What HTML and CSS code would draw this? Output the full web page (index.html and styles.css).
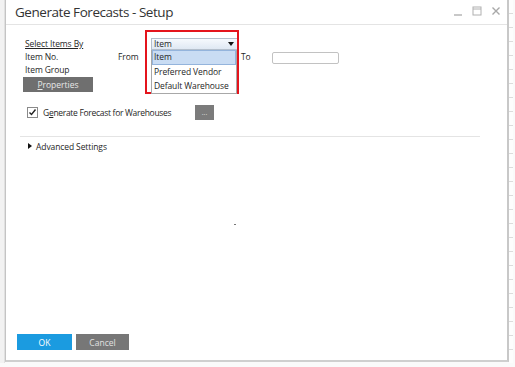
FILE: index.html
```html
<!DOCTYPE html>
<html lang="en">
<head>
    <meta charset="UTF-8">
    <meta name="viewport" content="width=device-width, initial-scale=1.0">
    <title>Generate Forecasts - Setup</title>
    <link rel="stylesheet" href="styles.css">
</head>
<body>
    <div class="backdrop-left"></div>

    <div class="window">
        <div class="titlebar">
            <span class="title">Generate Forecasts - Setup</span>
            <div class="controls">
                <svg width="10" height="10" viewBox="0 0 10 10"><path d="M1 9h8" stroke="#b0b0b0" stroke-width="1.4"/></svg>
                <svg width="10" height="10" viewBox="0 0 10 10"><rect x="1" y="1" width="8" height="8" fill="none" stroke="#b0b0b0"/><path d="M1 3h8" stroke="#b0b0b0"/></svg>
                <svg width="10" height="10" viewBox="0 0 10 10"><path d="M1.5 1.5l7 7M8.5 1.5l-7 7" stroke="#a8a8a8" stroke-width="1.4"/></svg>
            </div>
        </div>

        <div class="content">
            <div class="form">
                <span class="label"><u>Select Items By</u></span>
                <span></span>
                <div class="combo-cell">
                    <div class="combo">
                        <span>Item</span>
                        <span class="arrow"></span>
                    </div>
                    <div class="highlight"></div>
                    <ul class="dropdown">
                        <li class="selected">Item</li>
                        <li>Preferred Vendor</li>
                        <li>Default Warehouse</li>
                    </ul>
                </div>
                <span></span>
                <span></span>

                <span class="label">Item No.</span>
                <span class="label">From</span>
                <span></span>
                <span class="label to">To</span>
                <div class="field"></div>

                <span class="label">Item Group</span>
                <span></span>
                <span></span>
                <span></span>
                <span></span>
            </div>

            <button class="btn btn-grey btn-properties"><u>P</u>roperties</button>

            <div class="check-row">
                <label class="check">
                    <svg width="11" height="11" viewBox="0 0 11 11"><rect x="0.5" y="0.5" width="10" height="10" fill="#fff" stroke="#8a8a8a"/><path d="M2.5 5.5l2 2 4-5" fill="none" stroke="#222" stroke-width="1.4"/></svg>
                    <span>G<u>e</u>nerate Forecast for Warehouses</span>
                </label>
                <button class="btn btn-grey btn-more">...</button>
            </div>

            <div class="separator"></div>

            <div class="advanced">
                <span class="tri"></span>
                <span>Advanced Settings</span>
            </div>

            <div class="spacer">
                <span class="dot"></span>
            </div>

            <div class="footer">
                <button class="btn btn-ok">OK</button>
                <button class="btn btn-grey btn-cancel">Cancel</button>
            </div>
        </div>
    </div>

    <div class="backdrop-right"></div>
</body>
</html>
```

FILE: styles.css
```css
body {
    margin: 0;
    padding: 0;
    width: 515px;
    height: 367px;
    display: flex;
    align-items: flex-start;
    background-color: #fafafa;
    font-family: 'Open Sans', 'Noto Sans', sans-serif;
    color: #262626;
    overflow: hidden;
}

.backdrop-left {
    width: 4px;
    height: 363px;
    background-color: #f2f2f2;
    border-right: 1px solid #e0e0e0;
}

.backdrop-right {
    width: 4px;
    height: 363px;
    background: repeating-linear-gradient(to bottom, #fdfdfd 0, #fdfdfd 13px, #dcdcdc 13px, #dcdcdc 14px);
}

.window {
    width: 504px;
    height: 362px;
    background-color: #fff;
    border-left: 1px solid #c4c4c4;
    border-right: 2px solid #c8c8c8;
    border-bottom: 2px solid #cfcfcf;
    box-sizing: border-box;
    display: flex;
    flex-direction: column;
}

.titlebar {
    height: 25px;
    border-bottom: 1px solid #e4e4e4;
    display: flex;
    align-items: center;
    justify-content: space-between;
    padding: 0 6px 0 9px;
    box-sizing: border-box;
}

.title {
    font-size: 13.5px;
    color: #333;
    letter-spacing: -0.45px;
}

.controls {
    display: flex;
    gap: 9px;
    margin-top: -2px;
}

.content {
    flex: 1;
    display: flex;
    flex-direction: column;
    padding: 12px 0 9px 19px;
    font-size: 8.5px;
    letter-spacing: -0.1px;
}

.form {
    display: grid;
    grid-template-columns: 93px 33px 88px 33px 67px;
    grid-auto-rows: 13px;
    align-items: center;
}

.label {
    white-space: nowrap;
}

.combo-cell {
    position: relative;
    height: 12px;
}

.combo {
    height: 12px;
    box-sizing: border-box;
    border: 1px solid #b4bfcc;
    background: linear-gradient(#f6f9fd, #dfe8f3);
    display: flex;
    align-items: center;
    justify-content: space-between;
    padding: 0 4px 0 2px;
}

.arrow {
    width: 0;
    height: 0;
    border-left: 3.5px solid transparent;
    border-right: 3.5px solid transparent;
    border-top: 4px solid #111;
}

.highlight {
    position: absolute;
    left: -6px;
    top: -8px;
    width: 94px;
    height: 64px;
    border: 2px solid #e4141c;
    box-sizing: border-box;
    pointer-events: none;
}

.dropdown {
    position: absolute;
    left: 0;
    top: 12px;
    width: 86px;
    margin: 0;
    padding: 0;
    list-style: none;
    background-color: #fff;
    border: 1px solid #a8a8a8;
    border-top: none;
    box-sizing: border-box;
}

.dropdown li {
    height: 14px;
    line-height: 14px;
    padding-left: 2px;
    white-space: nowrap;
}

.dropdown li.selected {
    background-color: #c9dcf3;
    border: 1px solid #94b4dc;
    height: 13px;
    line-height: 12px;
    padding-left: 1px;
}

.to {
    padding-left: 2px;
}

.field {
    height: 12px;
    border: 1px solid #c2c2c2;
    border-radius: 2px;
    box-sizing: border-box;
    margin-top: 2px;
}

.btn {
    border: none;
    font-family: inherit;
    font-size: 8.5px;
    color: #fff;
    cursor: pointer;
    padding: 0;
}

.btn-grey {
    background-color: #6f6f6f;
}

.btn-properties {
    width: 70px;
    height: 15px;
    margin: 1px 0 0 -2px;
    color: #e8e8e8;
}

.check-row {
    display: flex;
    align-items: center;
    margin-top: 13px;
    height: 15px;
}

.check {
    display: flex;
    align-items: center;
    gap: 5px;
    margin-left: 2px;
    width: 168px;
    white-space: nowrap;
    letter-spacing: -0.3px;
}

.btn-more {
    width: 19px;
    height: 15px;
    background-color: #7b7b7b;
    font-size: 7px;
    color: #ddd;
}

.separator {
    height: 1px;
    background-color: #e4e4e4;
    width: 460px;
    margin: 16px 0 0 -5px;
}

.advanced {
    display: flex;
    align-items: center;
    gap: 4px;
    margin: 2px 0 0 3px;
    height: 14px;
}

.tri {
    width: 0;
    height: 0;
    border-top: 3.5px solid transparent;
    border-bottom: 3.5px solid transparent;
    border-left: 4px solid #111;
}

.spacer {
    flex: 1;
    position: relative;
}

.dot {
    position: absolute;
    left: 209px;
    top: 71px;
    width: 2px;
    height: 1px;
    background-color: #777;
}

.footer {
    display: flex;
    gap: 4px;
    margin-left: -8px;
    margin-bottom: 1px;
}

.btn-ok {
    width: 55px;
    height: 16px;
    background-color: #1b9be0;
}

.btn-cancel {
    width: 53px;
    height: 16px;
    background-color: #777;
    color: #e0e0e0;
}
```
